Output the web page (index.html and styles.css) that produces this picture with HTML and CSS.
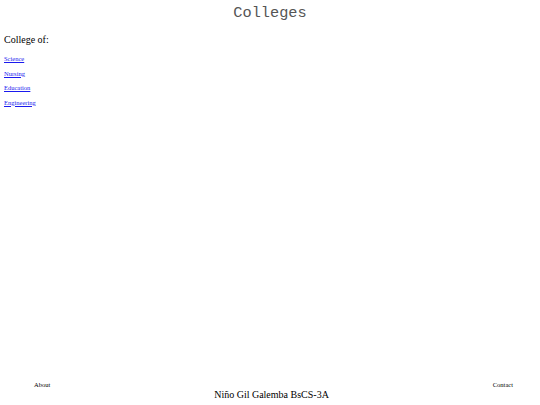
FILE: index.html
```html
<!DOCTYPE html>
<html>
<head>
<meta charset="utf-8">
<title>Colleges</title>
<link rel="stylesheet" href="styles.css">
</head>
<body>
<div class="page">
  <header class="top">
    <h1 class="title">Colleges</h1>
  </header>
  <main class="content">
    <h2 class="subtitle">College of:</h2>
    <nav class="links">
      <a href="#" class="link">Science</a>
      <a href="#" class="link">Nursing</a>
      <a href="#" class="link">Education</a>
      <a href="#" class="link">Engineering</a>
    </nav>
  </main>
  <footer class="footer">
    <span class="foot-link">About</span>
    <span class="name">Niño Gil Galemba BsCS-3A</span>
    <span class="foot-link">Contact</span>
  </footer>
</div>
</body>
</html>
```
FILE: styles.css
```css
html, body {
  margin: 0;
  padding: 0;
  background: #fff;
}
body {
  font-family: "Liberation Serif", "Times New Roman", serif;
  color: #000;
}
.page {
  min-height: 405px;
  display: flex;
  flex-direction: column;
}
.top {
  padding-top: 4px;
}
.title {
  margin: 0;
  font-family: "Liberation Mono", "Courier New", monospace;
  font-weight: normal;
  font-size: 15.3px;
  line-height: 18px;
  text-align: center;
  color: #555;
}
.content {
  padding-left: 4px;
  padding-top: 12px;
}
.subtitle {
  margin: 0;
  font-weight: normal;
  font-size: 10px;
  line-height: 12px;
}
.links {
  display: flex;
  flex-direction: column;
  align-items: flex-start;
  padding-top: 6px;
}
.link {
  font-size: 6.5px;
  line-height: 14.5px;
  color: #1a1aee;
}
.footer {
  margin-top: auto;
  display: flex;
  justify-content: space-between;
  align-items: flex-start;
  padding: 0 27px 4px 34px;
}
.foot-link {
  font-size: 6.5px;
  line-height: 8px;
}
.name {
  margin-top: 8px;
  font-size: 10px;
  line-height: 12px;
}
```
